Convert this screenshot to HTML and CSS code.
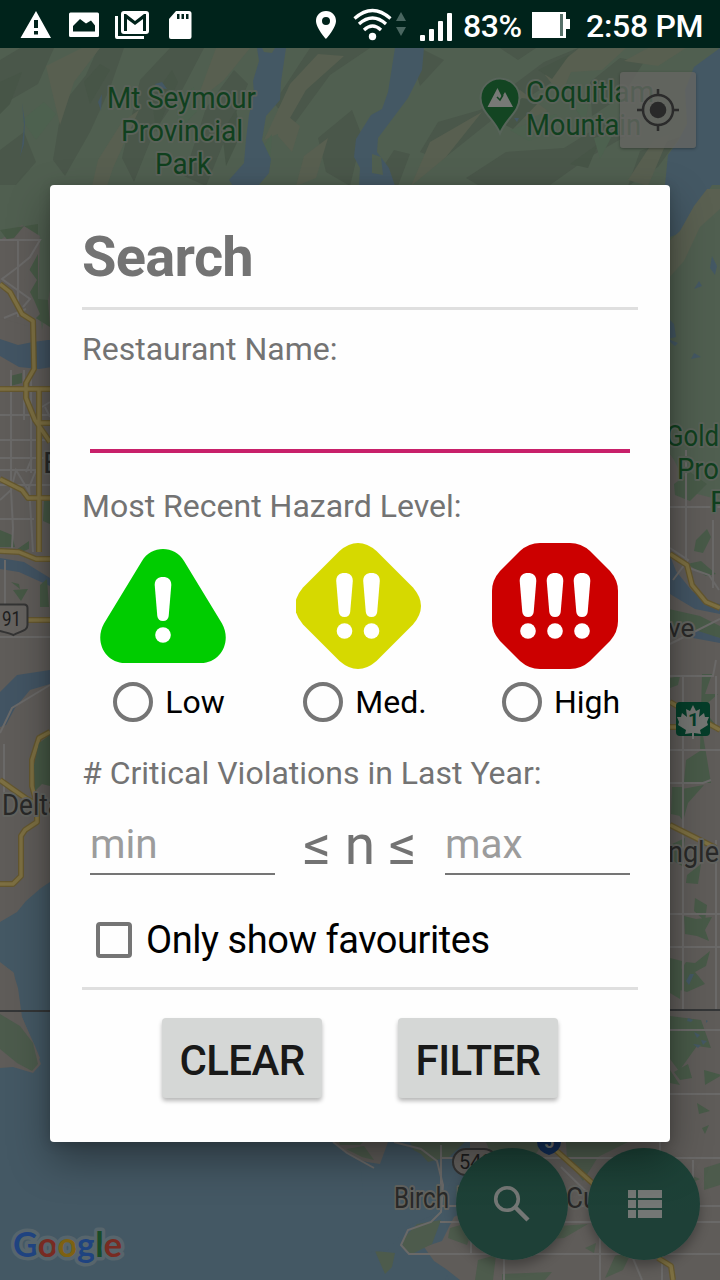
FILE: index.html
```html
<!DOCTYPE html>
<html lang="en">
<head>
<meta charset="utf-8">
<title>Restaurant search</title>
<link rel="stylesheet" href="styles.css">
</head>
<body>
<div class="screen">
  <svg class="map" viewBox="0 0 720 1280" aria-hidden="true">
    <rect width="720" height="1280" fill="#5f5c59"/>
    <!-- mountains -->
    <path fill="#505f50" d="M0 48H720V500L690 492 674 460 660 440V190H50V290L42 330 38 300 40 240 22 225 0 240Z"/>
    <g fill="#4a574a">
      <path d="M0 60l20-12h34l-16 36-38 22zM62 105l24-30 12-27h26l-14 40-20 44-25 44-12-16zM0 150l24-18 12 30-20 23H0z"/>
      <path d="M140 80l30-32h34l-24 46-26 38-20 50-12-24zM206 108l28-38 14 14-20 48-22 54-22-10zM330 75l40-27h-60l-36 55 18 24zM318 138l34-28 10 26-12 50-24-14z"/>
      <path d="M438 122l42-12 64-48 34-14 8 10-40 28-54 34-50 40-22-8zM420 48l24 12-24 26-6-20zM466 178l40-26 58-4 42-26 20 14-38 22-38 27h-72zM590 82l30-24 24 4-22 34-30 20zM640 151l40-14-22 30-30 19z"/>
      <path d="M376 178l18-28 16 4-12 32zM500 48h36l-18 12z"/>
    </g>
    <g fill="#585f50">
      <path d="M46 66l36-18h18L74 82 60 125zM98 160l24-38 17-12-26 58-6 18H92zM216 48h34l-26 32-28 22zM290 84l28-30 26 2-38 34-24 42-18 8zM278 108l22 18-8 26-14-16zM304 156l24-18-12 40-20 8z"/>
      <path d="M430 142l52-30-36 45-35 29zM545 75l33-26 48-1-24 22-31 2-10 23zM488 96l32-6 28 21-22 9zM628 180l26-40 16-6-22 52zM624 61l24-13h38l-28 18z"/>
    </g>
    <g fill="#475547">
      <path d="M0 82l22-10-12 32-10 10zM84 82l16-18 10 6-20 34zM152 98l20-28 6 12-22 50zM222 132l14-22 5 24-15 32zM492 118l30-20 18 3-27 28zM538 70l32-16-18 25zM570 164l28-20-10 24z"/>
    </g>
    <g fill="#4d614f">
      <path d="M22 120l22-18 12 12-20 26zM176 104l18-17 3 24-18 20zM256 156l16-22-2 30zM510 130l46-16 8 13-35 14zM572 104l18-8-5 27zM594 138l20-6-14 27z"/>
    </g>
    <g fill="#445864">
      <path d="M257 48h5l2 4 8 1 3-5h11l-5 34-1 18-14 16-4 24 9 19-2 14-11 13h-25l-4-6 15-17 2-24 3-24 5-22-1-12 6-20z"/>
      <path d="M395 48h29l-2 22-14 28-30 40-1 14 12 16 6 18h-36l1-18-6-11 2-18 15-24 11-6 6-17z"/>
      <path d="M720 48v137h-55l3-30 10-14 9-17-2-34 9-23z"/>
      <path d="M660 185h52l-18 28-14 20-20 8zM660 310l14 14 2 13-8 2 10 4-3 3-15-12zM712 256l5 10-2 9-5-7zM699 281l3 5-8 3zM694 353l7 4-10 2zM155 84l7-2 5 7-10-1zM514 118l5 0-2 4zM102 94l-4 8 3 9zM22 103l2 22-2 21-2 11 4-13 1-22z"/>
    </g>
    <path fill="#505f50" d="M372 154l9 3 2 18-11-2z"/>
    <path fill="#5a6051" d="M660 250l20-19 14-25 13-17h13v20l-20 18-16 34-24 27z"/>

    <!-- western shore -->
    <path fill="#425463" d="M0 339l18 6 15-3 15-2h4v27l-13 2-20-2-19-11zM0 558l24 4 26 16v8l-31-14-19-3zM0 692l17-17 33-5v14l-20 6-15 18-9 17-6 2z"/>
    <path fill="#465845" d="M0 230l38-6v75l10 1 2 27-16-10-8-18 11-19zM10 376l12-3v10l-12 3zM0 530l12 5 3 12H0zM16 550l13-9v8l-13 5zM11 582l8 2 1 5zM13 590l15-1-7 12zM40 585l7-6 2 28-9 0zM44 500h6v24l-7-3z"/>
    <path fill="#5f5c59" d="M0 240l14-2 10-12 16 10-2 18-14 26 10 20 6 14-12 12-28-8z"/>
    <g class="street">
      <path d="M0 240h40l-10 17-12 10-16 12 28 20-7 8M18 240v48M18 267v50M4 318l22-9M0 415h50M0 440h50M0 458h50M11 370v120M24 370v50M31 370v103M0 485h50M0 470h36l-8 20-12-20-5 20-11 10M0 519h34M11 490l2 38-1 20M29 485l4 67M42 407l8-5M45 407l5 10M0 733l12-25 38-23M4 744v60M32 458l-6 14M0 637h50M5 560v60"/>
    </g>
    <g class="highway-edge">
      <path d="M0 284l10 8 12 22 11 7 1 48-8 14v15l9 22 15 22M0 389h50M39 389v163M40 423h10M0 479l22 11 6 8h22M0 551l19 1 17 7h14M26 620h24M50 732l-11 6-7 22v26l5 18M0 780l14 10 13 9 10 5v18l-12 8-4 6v40l-8 8H0"/>
    </g>
    <g class="highway">
      <path d="M0 284l10 8 12 22 11 7 1 48-8 14v15l9 22 15 22M0 389h50M39 389v163M40 423h10M0 479l22 11 6 8h22M0 551l19 1 17 7h14M26 620h24M50 732l-11 6-7 22v26l5 18M0 780l14 10 13 9 10 5v18l-12 8-4 6v40l-8 8H0"/>
    </g>
    <path fill="#465845" d="M50 735l-11 8-5 22 1 26 7-7 8 2z"/>
    <path fill="#445864" d="M50 882l-9 6-15 13-9 11-17 10v40l14 11 6 40 15 33 5 12-7 11-33-7v218h460l-14-11-12-8-10-14 18-6 12-24 16-8v-69H50z"/>
    <path fill="#5f5c59" d="M0 963l13 9 5 16 4 29 13 31 6 16-8 9-20-6-13 1z"/>
    <path fill="#4c5b4c" d="M0 1014l20 12 13 17 5 21-6 7-15-8-17-14z"/>

    <!-- eastern valley -->
    <g fill="#485a48">
      <path d="M674 484l16-12 17 12-17 17-15-6zM696 540l11-11 4 8-8 16-9-2zM687 564l14-3 15 13-10 2zM660 607l40 9 20 10v12l-38-8-22-2zM670 678l10-2-2 9-8 3zM702 674l10 0-7 20 13 0-16 14 13 16-12 11 8 48-27-1 2-22 14-9zM682 789l22-4-16 18-5 18-7-10zM672 787l12 0-4 29-9-2z"/>
      <path d="M670 845l15-7-3 28-12-7zM687 875l14-11-3 20-12-1zM695 898l12 7-2 16-11-10zM684 916l12 3 16-2-7 13 4 11-12-5-12-2zM670 958l12 3-2 38-10-6zM686 962l9 1 15-12-4 15-11 6 10 12-18 8-17-5zM670 1016l31 4 10 28-14-2-18 25-9-12zM674 1072l14-8 4 14-12 2zM704 1070l18 5-17 10zM697 1103l13 8-11 3zM702 1128l7-3-4 9zM670 1070l10 15-10-2z"/>
    </g>
    <path fill="#425463" d="M660 545l9 8 7 18 16 20 15 10 13 3v10l-25-5-25-15-10-20zM695 630l25 8v5l-27-5z"/>
    <g fill="#445864"><path d="M690 974l4 0-5 11-3-4zM688 1018l5 2-2 2-4-1zM694 1032l6 3-3 3zM701 1040l6 1-4 4zM693 1044l8 1-3 3zM706 1020l2 1-2 2z"/></g>
    <g class="street">
      <path d="M670 507h50M686 450v110M670 548l18 12-15 20M689 568l20 7 10 15M713 520v68M670 676h43l3-16M670 750h50M670 783h33l8-3M683 676v335M716 676v55M716 840v170M670 914h50M670 947h50M670 1030h50M670 1094h50M670 644l50-25"/>
    </g>
    <g class="highway-edge"><path d="M670 554l17 11 5 20 14 17 14 6M670 702l50 28M670 727l15 0M670 825l46 23"/></g>
    <g class="highway"><path d="M670 554l17 11 5 20 14 17 14 6M670 702l50 28M670 727l15 0M670 825l46 23"/></g>

    <!-- southern peninsula -->
    <path fill="#5f5c59" d="M333 1142h55l-8 22-20-3-14-8z"/>
    <path fill="#4d5b4c" d="M339 1142h24l-3 3h-20zM346 1149l18-3 10 14-12-3zM410 1142h55l-16 15-30 7zM486 1142h57l-10 17-38 4zM566 1142h62l-30 15-15 24-16-22zM404 1238l13-14 24-4-9 24-20 10-10-6zM375 1251l20 2-3 14-7 7zM450 1228l25-7-8 24-19-7zM500 1230l88-6-24 14-46 3zM585 1248l11-5-2 10zM690 1175l10 4-9 4zM704 1168l16-5v22l-16 5zM615 1256l18-7-10 21-18 8zM478 1260l18-5-3 25h-18zM502 1274l50-2-7 8h-43z"/>
    <path fill="#445864" d="M360 1160l20 6 12-16 10-6 19 10 14 16 5 22-4 22-28 12-20 24-25 3v-60zM447 1275l2 5h-4z"/>
    <path class="park-road" d="M333 1142l14 11 27 15M394 1142l27 7 16 12 6 24-2 27-10 10-23 8-7 15 8 9h311M441 1145v60M470 1148v60M441 1158h279M441 1206h279M471 1220v35M504 1150v130M440 1222h95M562 1222h158M600 1190v90M660 1142v20M662 1166v114M693 1160v65M561 1167l43 42M632 1256l10 24"/>
    <path class="highway-edge" d="M550 1145l48 43M658 1258l13 8 2 14"/>
    <path class="highway" d="M550 1145l48 43M658 1258l13 8 2 14"/>
    <path fill="none" stroke="#343637" stroke-width="2" d="M0 1011h50M670 1010h50"/>

    <!-- labels -->
    <g class="place park">
      <text x="107" y="108" textLength="149" lengthAdjust="spacingAndGlyphs">Mt Seymour</text>
      <text x="121" y="141" textLength="122" lengthAdjust="spacingAndGlyphs">Provincial</text>
      <text x="155" y="174" textLength="56" lengthAdjust="spacingAndGlyphs">Park</text>
      <text x="526" y="102" textLength="128" lengthAdjust="spacingAndGlyphs">Coquitlam</text>
      <text x="526" y="135" textLength="115" lengthAdjust="spacingAndGlyphs">Mountain</text>
      <text x="666" y="446" textLength="53" lengthAdjust="spacingAndGlyphs">Gold</text>
      <text x="677" y="479" textLength="42" lengthAdjust="spacingAndGlyphs">Pro</text>
      <text x="710" y="512">P</text>
    </g>
    <g class="place">
      <text x="43" y="473">B</text>
      <text x="2" y="815" textLength="60" lengthAdjust="spacingAndGlyphs">Delta</text>
      <text x="668" y="637" class="small">ve</text>
      <text x="668" y="862" textLength="51" lengthAdjust="spacingAndGlyphs">ngle</text>
      <text x="394" y="1208" textLength="55" lengthAdjust="spacingAndGlyphs">Birch</text>
      <text x="456" y="1208">Bay</text>
      <text x="566" y="1208" textLength="76" lengthAdjust="spacingAndGlyphs">Custer</text>
    </g>
    <path fill="#134522" stroke="#58645a" stroke-width="2" d="M500 78.500c-10.500 0-19.500 8.500-19.500 19.500 0 14 14 21 19.500 35.500 5.500-14.500 19.500-21.500 19.500-35.500 0-11-9-19.500-19.500-19.500z"/>
    <path fill="#777976" d="M487.500 107l10-19 4.500 9 3-5 8 15z"/>
    <path fill="none" stroke="#134522" stroke-width="1.500" d="M497 97l3 3 3-5"/>
    <path fill="#65625f" stroke="#343434" stroke-width="2" d="M-8 604.500h32q3.500 0 3.500 3.500v17c0 6-7 6-14 10-8-4-21-3-21-11z"/>
    <text class="shield" x="2" y="626" textLength="19" lengthAdjust="spacingAndGlyphs">91</text>
    <rect x="676" y="702" width="34" height="34" rx="4" fill="#053d29"/>
    <path fill="#737572" d="M693 705l3 6 4-2-1 8 5-4 1 4 4 0-2 5 1 3-8 5 1 4-7-1 0 1v5h-2v-5l0-1-7 1 1-4-8-5 1-3-2-5 4 0 1-4 5 4-1-8 4 2z"/>
    <text x="688" y="726" class="route">1</text>
    <rect x="453" y="1149" width="44" height="26" rx="13" fill="#65625f" stroke="#343434" stroke-width="2"/>
    <text class="shield" x="459" y="1169">548</text>
    <path fill="#122e58" d="M537 1142h24q0 9-12 13-12-4-12-13z"/>
    <text x="544" y="1148" class="interstate">5</text>
    <text class="google" x="13" y="1257" textLength="109" lengthAdjust="spacingAndGlyphs"><tspan fill="#1f4380">G</tspan><tspan fill="#782b22">o</tspan><tspan fill="#7e6112">o</tspan><tspan fill="#1f4380">g</tspan><tspan fill="#184b27">l</tspan><tspan fill="#782b22">e</tspan></text>
  </svg>

  <div class="locate">
    <svg width="44" height="44" viewBox="0 0 44 44"><g fill="none" stroke="#2b2b2b" stroke-width="2.500"><circle cx="22" cy="22" r="15"/><path d="M22 1v7M22 36v7M1 22h7M36 22h7"/></g><circle cx="22" cy="22" r="8.300" fill="#292929"/></svg>
  </div>
  <div class="fabs">
    <div class="fab"><svg width="112" height="112" viewBox="0 0 112 112"><circle cx="51" cy="51" r="11.300" fill="none" stroke="#747775" stroke-width="3.600"/><path d="M59 59l2 2 11 11" fill="none" stroke="#747775" stroke-width="4.500"/></svg></div>
    <div class="fab"><svg width="112" height="112" viewBox="0 0 112 112"><path fill="#747775" d="M40 42h8v8h-8zM50 42h24v8H50zM40 52h8v8h-8zM50 52h24v8H50zM40 62h8v8h-8zM50 62h24v8H50z"/></svg></div>
  </div>

  <header class="status">
    <svg width="460" height="48" viewBox="0 0 460 48" fill="#fff">
      <path fill-rule="evenodd" d="M36 11L20.500 38h30.500zM34 20h4v8h-4zM34 31h4v3.500h-4z"/>
      <path fill-rule="evenodd" d="M70.500 12.500h27q1.500 0 1.500 1.500v21.500q0 1.500-1.500 1.500h-27q-1.500 0-1.500-1.500v-21.500q0-1.500 1.500-1.500zM73 31.500h22v-6l-4-5-5 3-6-4.500-4 4-3 3z"/>
      <path fill-rule="evenodd" d="M124 11h22q3 0 3 3v17q0 3-3 3h-22q-3 0-3-3V14q0-3 3-3zM124 14v17h3V19l8 6 8-6v12h3V14h-2l-9 7-9-7z"/>
      <path d="M115 16h3v20h26v3h-27q-2 0-2-2z"/>
      <path fill-rule="evenodd" d="M176 11h13q2.500 0 2.500 2.500V37q0 2-2 2h-18.500q-2 0-2-2V19zM177 14v5h2.500v-5zM181.500 14v5h2.500v-5zM186 14v5h2.500v-5z"/>
      <path fill-rule="evenodd" d="M326 11c-6 0-10 4.500-10 10 0 7 10 18 10 18s10-11 10-18c0-5.500-4-10-10-10zm0 6a4 4 0 1 1 0 8 4 4 0 0 1 0-8z"/>
      <g fill="none" stroke="#fff" stroke-width="3.300"><path d="M354.500 18.500q18-16 36 0M359 24q13.500-12 27 0M364 30q8.500-8 17 0"/></g><circle cx="372.500" cy="36.500" r="3.700"/>
      <path fill="#496660" d="M401 12l5 9h-10zM401 36l5-9h-10z"/>
      <rect x="420" y="35" width="5" height="6" rx="1"/><rect x="429" y="29" width="5" height="12" rx="1"/><rect x="438" y="21" width="5" height="20" rx="1"/><rect x="447" y="13" width="5" height="28" rx="1"/>
    </svg>
    <span class="percent">83%</span>
    <svg class="battery" width="38" height="26" viewBox="0 0 38 26"><path fill="#fff" d="M0 0h34v7h4v10h-4v9H0z"/><path fill="#567069" d="M28 2h3v22h-3z"/></svg>
    <span class="time">2:58 PM</span>
  </header>

  <main class="dialog">
    <h1>Search</h1>
    <div class="divider"></div>
    <label class="caption name-label" for="name">Restaurant Name:</label>
    <input class="name" id="name" type="text">
    <p class="caption hazard-label">Most Recent Hazard Level:</p>
    <svg width="0" height="0" class="defs"><defs><g id="bang" fill="#fff"><path d="M-8.300 8C-8.300 2.500-5 0 0 0S8.300 2.500 8.300 8L5.700 39Q5 44 0 44T-5.700 39z"/><circle cx="0" cy="58" r="7.800"/></g></defs></svg>
    <div class="hazards">
      <label class="hazard">
        <svg width="126" height="126" viewBox="0 0 126 126"><path fill="#00cc00" d="M42 18C51 2 75 2 84 18l38 62.500C132 98 121 120 101 120H25C5 120-6 98 4 80.500z"/><use href="#bang" transform="translate(63 34)"/></svg>
        <span class="choice"><input type="radio" name="hazard">Low</span>
      </label>
      <label class="hazard">
        <svg width="126" height="126" viewBox="0 0 126 126"><path fill="#d6d900" d="M43.500 8Q62-8 80.500 8L117 44.500Q133 63 117 81.500L80.500 118Q62 134 43.500 118L7 81.500Q-9 63 7 44.500z"/><use href="#bang" transform="translate(48.500 30)"/><use href="#bang" transform="translate(75.500 30)"/></svg>
        <span class="choice"><input type="radio" name="hazard">Med.</span>
      </label>
      <label class="hazard">
        <svg width="126" height="126" viewBox="0 0 126 126"><path fill="#cc0000" d="M48 0H78Q89 0 98 8L118 28Q126 37 126 48V78Q126 89 118 98L98 118Q89 126 78 126H48Q37 126 28 118L8 98Q0 89 0 78V48Q0 37 8 28L28 8Q37 0 48 0z"/><use href="#bang" transform="translate(36 30)"/><use href="#bang" transform="translate(63 30)"/><use href="#bang" transform="translate(90 30)"/></svg>
        <span class="choice"><input type="radio" name="hazard">High</span>
      </label>
    </div>
    <p class="caption violations-label"># Critical Violations in Last Year:</p>
    <div class="range">
      <input type="text" placeholder="min">
      <span class="relation">≤ n ≤</span>
      <input type="text" placeholder="max">
    </div>
    <label class="favourites"><input type="checkbox">Only show favourites</label>
    <div class="divider"></div>
    <div class="actions"><button>CLEAR</button><button>FILTER</button></div>
  </main>
</div>
</body>
</html>
```
FILE: styles.css
```css
* { box-sizing: border-box; }
body { margin: 0; font-family: Roboto, "Noto Sans", sans-serif; }
h1, p { margin: 0; }
input, button { font-family: inherit; }
.screen { position: relative; width: 720px; height: 1280px; overflow: hidden; }

.map { position: absolute; left: 0; top: 0; width: 720px; height: 1280px; }
.street, .park-road { fill: none; stroke: #6a6968; stroke-width: 2; }
.highway-edge { fill: none; stroke: #64572f; stroke-width: 6; stroke-linejoin: round; }
.highway { fill: none; stroke: #7c6f42; stroke-width: 3.5; stroke-linejoin: round; }
.place { font-size: 30px; fill: #292928; stroke: #62635f; stroke-width: 4px; stroke-linejoin: round; paint-order: stroke; }
.park { fill: #10401e; stroke: #5a6259; }
.small { font-size: 26px; }
.shield { font-size: 20px; fill: #1e1e1e; }
.route { font-size: 19px; font-weight: 700; fill: #053d29; }
.interstate { font-size: 18px; font-weight: 700; fill: #737572; }
.google { font-family: Lato, Roboto, sans-serif; font-size: 35px; font-weight: 700; stroke: #57656c; stroke-width: 7px; stroke-linejoin: round; paint-order: stroke; }

.locate { position: absolute; left: 620px; top: 72px; width: 76px; height: 76px; display: flex; align-items: center; justify-content: center; border-radius: 3px; background: rgba(101, 101, 98, 0.8); box-shadow: 0 1px 3px rgba(0, 0, 0, 0.3); }
.fabs { position: absolute; left: 456px; top: 1148px; display: flex; gap: 20px; }
.fab { width: 112px; height: 112px; border-radius: 50%; background: linear-gradient(#1c4237, #1e4037 60%); box-shadow: 0 6px 12px rgba(0, 0, 0, 0.3); }
.fab svg { display: block; }

.status { position: relative; display: flex; align-items: center; height: 48px; background: #00231b; color: #fff; font-size: 32px; font-weight: 500; line-height: 48px; white-space: nowrap; }
.percent { width: 72px; margin-left: 3px; padding-top: 4px; letter-spacing: -0.5px; }
.battery { margin: 2px 0 0 -3px; }
.time { margin-left: 16px; padding-top: 4px; letter-spacing: -0.3px; }

.dialog { position: relative; width: 620px; height: 957px; margin: 137px auto 0; padding: 32px; border-radius: 4px; background: #fefefe; box-shadow: 0 18px 40px rgba(0, 0, 0, 0.36), 0 2px 12px rgba(0, 0, 0, 0.16); color: #737373; }
h1 { height: 80px; line-height: 80px; font-size: 56px; font-weight: 700; letter-spacing: -0.7px; }
.divider { height: 3px; background: #dfdfdf; margin-top: 10px; }
.caption { display: block; height: 38px; line-height: 38px; font-size: 32px; white-space: nowrap; }
.name-label { margin-top: 20px; }
.name { display: block; width: 540px; height: 85px; margin: 0 8px; padding: 0; border: 0; border-bottom: 4px solid #c8206a; background: none; font-size: 40px; outline: 0; }
.hazard-label { margin-top: 34px; }
.defs { position: absolute; }
.hazards { display: grid; grid-template-columns: repeat(3, 196px); margin: 18px -17px 0; }
.hazard { display: flex; flex-direction: column; align-items: center; }
.hazard svg { display: block; }
.choice { display: flex; align-items: center; gap: 12px; height: 40px; margin: 13px 0 0 12px; color: #000; font-size: 32px; line-height: 42px; }
input[type="radio"], input[type="checkbox"] { appearance: none; flex: none; margin: 0; border: 4px solid #757575; }
input[type="radio"] { width: 40px; height: 40px; border-radius: 50%; }
.violations-label { margin-top: 32px; }
.range { display: flex; align-items: flex-end; justify-content: space-between; height: 83px; padding: 0 8px; }
.range input { width: 185px; height: 60px; padding: 0 0 1px; border: 0; border-bottom: 2px solid #757575; background: none; font-size: 40.500px; }
.range input::placeholder { color: #9c9c9c; opacity: 1; }
.relation { height: 60px; line-height: 60px; font-size: 55px; }
.favourites { display: flex; align-items: center; gap: 14px; height: 44px; margin: 43px 0 0 14px; color: #000; font-size: 38px; line-height: 46px; letter-spacing: -0.45px; white-space: nowrap; }
input[type="checkbox"] { width: 36px; height: 36px; border-radius: 4px; }
.favourites + .divider { margin-top: 25px; }
.actions { display: flex; justify-content: center; gap: 76px; margin-top: 28px; }
.actions button { width: 160px; height: 80px; padding: 4px 0 0; border: 0; border-radius: 4px; background: #d5d7d6; box-shadow: 0 3px 4px rgba(0, 0, 0, 0.28); color: #191919; font-size: 42px; font-weight: 500; letter-spacing: -0.6px; }
```
